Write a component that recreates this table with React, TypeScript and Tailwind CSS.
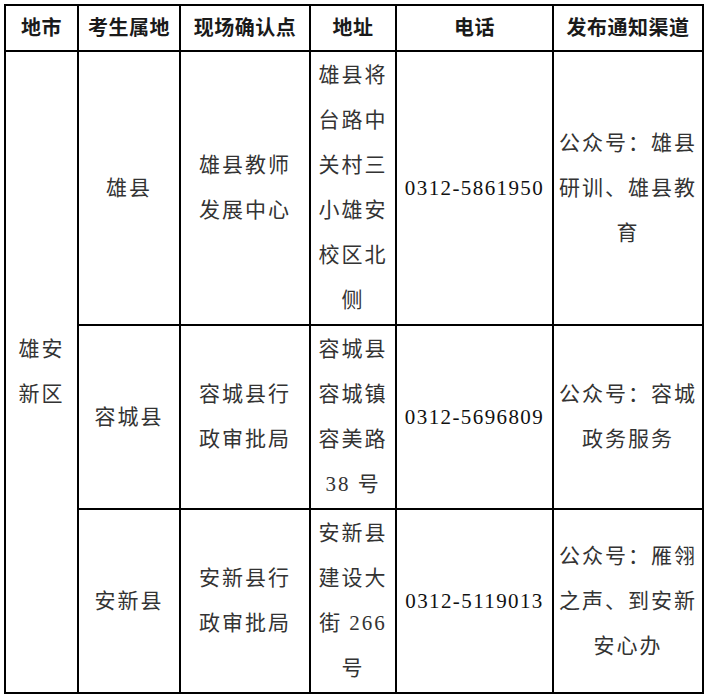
import React from 'react';

type Cell = { lines: string[]; rowSpan?: number };

const header = ['地市', '考生属地', '现场确认点', '地址', '电话', '发布通知渠道'];

const rows: { h: string; cells: Cell[] }[] = [
  {
    h: 'h-[274px]',
    cells: [
      { lines: ['雄安', '新区'], rowSpan: 3 },
      { lines: ['雄县'] },
      { lines: ['雄县教师', '发展中心'] },
      { lines: ['雄县将', '台路中', '关村三', '小雄安', '校区北', '侧'] },
      { lines: ['0312-5861950'] },
      { lines: ['公众号：雄县', '研训、雄县教', '育'] },
    ],
  },
  {
    h: 'h-[184px]',
    cells: [
      { lines: ['容城县'] },
      { lines: ['容城县行', '政审批局'] },
      { lines: ['容城县', '容城镇', '容美路', '38 号'] },
      { lines: ['0312-5696809'] },
      { lines: ['公众号：容城', '政务服务'] },
    ],
  },
  {
    h: 'h-[184px]',
    cells: [
      { lines: ['安新县'] },
      { lines: ['安新县行', '政审批局'] },
      { lines: ['安新县', '建设大', '街 266', '号'] },
      { lines: ['0312-5119013'] },
      { lines: ['公众号：雁翎', '之声、到安新', '安心办'] },
    ],
  },
];

const App = () => {
  return (
    <div className="w-[705px] h-[696px] bg-white pt-[4px] pl-[4px] font-['Liberation_Serif','Noto_Sans_CJK_SC',serif] text-[#333]">
      <table className="table-fixed border-collapse w-[698px]">
        <colgroup>
          <col className="w-[73px]" />
          <col className="w-[102px]" />
          <col className="w-[130px]" />
          <col className="w-[86px]" />
          <col className="w-[157px]" />
          <col className="w-[150px]" />
        </colgroup>
        <thead>
          <tr className="h-[46px]">
            {header.map((t) => (
              <th
                key={t}
                className="border-2 border-black p-0 text-center align-middle text-[20px] font-bold tracking-[0.5px] text-[#1a1a1a] leading-none"
              >
                {t}
              </th>
            ))}
          </tr>
        </thead>
        <tbody>
          {rows.map((r, i) => (
            <tr key={i} className={r.h}>
              {r.cells.map((c, j) => (
                <td
                  key={j}
                  rowSpan={c.rowSpan}
                  className="border-2 border-black p-0 text-center align-middle text-[21px] tracking-[2px] leading-[45px] whitespace-nowrap"
                >
                  {c.lines.map((l, k) => (
                    <div key={k} className={/^\d{4}-/.test(l) ? 'tracking-[1.4px] text-[#111]' : ''}>
                      {l}
                    </div>
                  ))}
                </td>
              ))}
            </tr>
          ))}
        </tbody>
      </table>
    </div>
  );
};

export default App;
